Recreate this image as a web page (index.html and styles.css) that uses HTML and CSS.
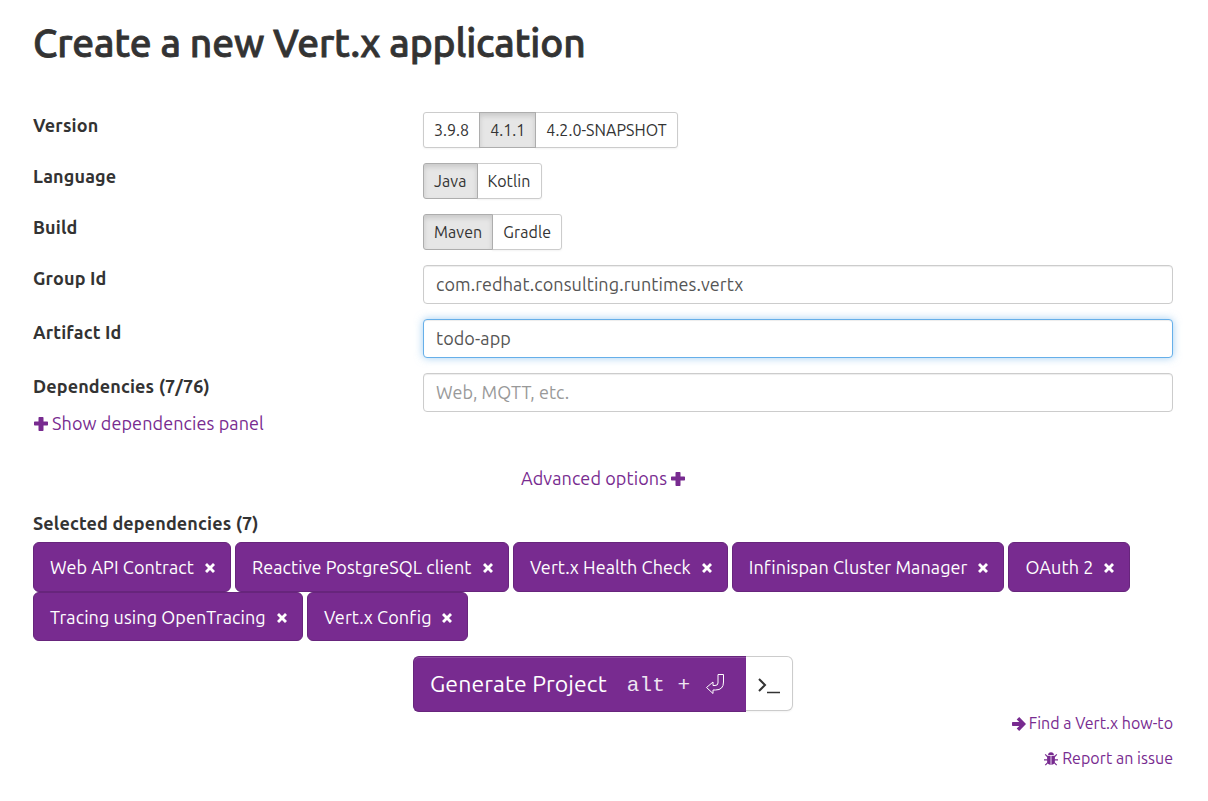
FILE: index.html
```html
<!DOCTYPE html>
<html lang="en">
<head>
<meta charset="utf-8">
<title>Create a new Vert.x application</title>
<link rel="stylesheet" href="styles.css">
</head>
<body>
<svg class="defs" aria-hidden="true">
  <symbol id="plus" viewBox="0 0 14 14"><path d="M5.200 0h3.600q.7 0 .7.7v3.800h3.800q.7 0 .7.7v2.600q0 .7-.7.7H9.500v4.800q0 .7-.7.7H5.200q-.7 0-.7-.7V8.500H.7Q0 8.500 0 7.800V5.200q0-.7.7-.7h3.800V.7q0-.7.7-.7z"/></symbol>
  <symbol id="times" viewBox="0 0 10 10"><path d="M2 0 5 3 8 0 10 2 7 5 10 8 8 10 5 7 2 10 0 8 3 5 0 2z"/></symbol>
  <symbol id="arrow" viewBox="0 0 14 14"><path d="M7.200 0 14 7 7.200 14 4.700 11.600 7.300 9H.700Q0 9 0 8.300V5.700Q0 5 .7 5H7.300L4.700 2.400z"/></symbol>
  <symbol id="bug" viewBox="0 0 14 14"><path d="M4.100 3.100a2.900 2.900 0 0 1 5.800 0z"/><path d="M3.100 3.800H6.600V13Q3.100 12.400 3.100 9.200zM7.400 3.800H10.900V9.200Q10.900 12.400 7.400 13z"/><path d="M1.200 2.300 3.600 4.800M12.800 2.300 10.400 4.800M0 7.800H3.500M14 7.800H10.500M1.300 13.200 4 10.400M12.700 13.200 10 10.400" fill="none" stroke="currentColor" stroke-width="1.200"/></symbol>
</svg>
<main class="page">
  <h1 class="title">Create a new Vert.x application</h1>
  <form class="form">
    <div class="row">
      <span class="label">Version</span>
      <div class="group"><button type="button" class="btn">3.9.8</button><button type="button" class="btn active">4.1.1</button><button type="button" class="btn">4.2.0-SNAPSHOT</button></div>
    </div>
    <div class="row">
      <span class="label">Language</span>
      <div class="group wide"><button type="button" class="btn active">Java</button><button type="button" class="btn">Kotlin</button></div>
    </div>
    <div class="row">
      <span class="label">Build</span>
      <div class="group wide"><button type="button" class="btn active">Maven</button><button type="button" class="btn">Gradle</button></div>
    </div>
    <div class="row">
      <label class="label" for="group">Group Id</label>
      <input class="input" id="group" value="com.redhat.consulting.runtimes.vertx">
    </div>
    <div class="row">
      <label class="label" for="artifact">Artifact Id</label>
      <input class="input focused" id="artifact" value="todo-app">
    </div>
    <div class="row deps">
      <div>
        <label class="label" for="deps">Dependencies (7/76)</label>
        <a class="link show"><svg class="plus"><use href="#plus"/></svg>Show dependencies panel</a>
      </div>
      <input class="input" id="deps" placeholder="Web, MQTT, etc.">
    </div>
    <a class="link advanced">Advanced options<svg class="plus"><use href="#plus"/></svg></a>
    <span class="label">Selected dependencies (7)</span>
    <div class="tags">
      <button type="button" class="tag w198">Web API Contract<svg class="times"><use href="#times"/></svg></button>
      <button type="button" class="tag w274">Reactive PostgreSQL client<svg class="times"><use href="#times"/></svg></button>
      <button type="button" class="tag w215">Vert.x Health Check<svg class="times"><use href="#times"/></svg></button>
      <button type="button" class="tag w273">Infinispan Cluster Manager<svg class="times"><use href="#times"/></svg></button>
      <button type="button" class="tag w122">OAuth 2<svg class="times"><use href="#times"/></svg></button>
      <button type="button" class="tag w270">Tracing using OpenTracing<svg class="times"><use href="#times"/></svg></button>
      <button type="button" class="tag w161">Vert.x Config<svg class="times"><use href="#times"/></svg></button>
    </div>
    <div class="generate">
      <button type="button" class="primary"><span>Generate Project</span><span class="keys">alt + </span><svg class="enter" viewBox="0 0 20 22"><path d="M13 1.500H18.500V9Q18.500 17 10.500 17H8V20.500L1.500 14.500 8 9V12.500H10Q13 12.500 13 10z"/></svg></button>
      <button type="button" class="terminal"><svg viewBox="0 0 24 20"><path class="chevron" d="M2 3 8 9 2 15"/><path class="cursor" d="M10 16.500H23"/></svg></button>
    </div>
  </form>
  <footer class="links">
    <a class="link"><svg class="small"><use href="#arrow"/></svg>Find a Vert.x how-to</a>
    <a class="link issue"><svg class="small"><use href="#bug"/></svg>Report an issue</a>
  </footer>
</main>
</body>
</html>
```
FILE: styles.css
```css
* { box-sizing: border-box; }
body { margin: 0; background: #fff; color: #333; font: 18px/25px Ubuntu, "Noto Sans", sans-serif; letter-spacing: .1px; }
button, input { font: inherit; letter-spacing: inherit; color: inherit; margin: 0; }
svg { display: block; flex: none; fill: currentColor; }
.defs { width: 0; height: 0; position: absolute; }
.page { padding: 21px 35px 0 33px; }
.title { margin: 0 0 47px; font-size: 39px; line-height: 44px; font-weight: 500; letter-spacing: -.16px; -webkit-text-stroke: .8px #333; }
.form { display: flex; flex-direction: column; }
.row { display: grid; grid-template-columns: 390px 750px; margin-bottom: 15px; align-items: start; }
.label { display: block; font-weight: 700; padding-top: 1px; line-height: 25px; letter-spacing: .14px; }
.group { display: flex; }
.btn { height: 36px; padding: 0 10px; border: 1px solid #ccc; background: #fff; font-size: 16px; line-height: 24px; letter-spacing: .04px; box-shadow: 0 1px 2px rgba(0,0,0,.05); }
.wide .btn { letter-spacing: .1px; }
.btn + .btn { margin-left: -1px; }
.btn:first-child { border-radius: 3px 0 0 3px; }
.btn:last-child { border-radius: 0 3px 3px 0; }
.btn.active { background: #e6e6e6; border-color: #adadad; box-shadow: inset 0 3px 5px rgba(0,0,0,.125); z-index: 1; }
.input { width: 750px; height: 39px; padding: 5px 12px 7px; border: 1px solid #ccc; border-radius: 4px; background: #fff; color: #555; box-shadow: inset 0 1px 1px rgba(0,0,0,.075); outline: 0; letter-spacing: .09px; }
.input::placeholder { color: #999; opacity: 1; letter-spacing: .05px; }
.focused { border-color: #66afe9; box-shadow: inset 0 1px 1px rgba(0,0,0,.075), 0 0 8px rgba(102,175,233,.6); }
.deps { margin-bottom: 30px; }
.link { display: flex; align-items: center; color: #782b90; text-decoration: none; }
.plus { width: 14px; height: 14px; }
.show { gap: 4px; margin-top: 12px; padding-left: 1px; }
.advanced { align-self: center; gap: 4px; margin-bottom: 19px; }
.tags { display: flex; flex-wrap: wrap; column-gap: 4px; margin-top: 6px; }
.tag { display: flex; align-items: center; justify-content: space-between; height: 50px; padding: 0 15px 0 16px; border: 1px solid #67257c; border-radius: 6px; background: #782b90; color: #fff; white-space: nowrap; letter-spacing: .08px; }
.tag:nth-child(n+6) { height: 49px; padding-top: 1px; }
.times { width: 10px; height: 10px; margin-top: 1px; }
.w198 { width: 198px; }
.w274 { width: 274px; }
.w215 { width: 214.7px; }
.w273 { width: 272.79px; }
.w122 { width: 122px; }
.w270 { width: 270px; }
.w161 { width: 161px; }
.generate { display: flex; align-self: center; margin-top: 15px; }
.primary { display: flex; align-items: center; width: 333px; height: 56px; padding: 0 0 2px 16px; border: 1px solid #67257c; border-right: 0; border-radius: 6px 0 0 6px; background: #782b90; color: #fff; font-size: 23px; white-space: pre; box-shadow: inset 0 1px 0 rgba(255,255,255,.15); }
.keys { margin-left: 20px; padding-top: 5px; font: 21px "Liberation Mono", monospace; letter-spacing: .1px; color: #eee4f1; }
.enter { width: 20px; height: 22px; margin: 2px 0 0 2px; fill: none; stroke: #fff; stroke-width: 1; }
.terminal { display: flex; align-items: center; justify-content: center; width: 47px; height: 55px; padding: 0; border: 1px solid #ccc; border-left: 0; border-radius: 0 6px 6px 0; background: #fff; box-shadow: 0 1px 2px rgba(0,0,0,.05); }
.terminal svg { width: 24px; height: 20px; margin-top: 5px; fill: none; stroke: #333; }
.chevron { stroke-width: 2; }
.cursor { stroke-width: 1.500; }
.links { display: flex; flex-direction: column; align-items: flex-end; gap: 12px; font-size: 16px; line-height: 23px; letter-spacing: 0; }
.links .link { gap: 3px; }
.links .issue { gap: 4px; letter-spacing: .04px; }
.small { width: 14px; height: 14px; }
```
